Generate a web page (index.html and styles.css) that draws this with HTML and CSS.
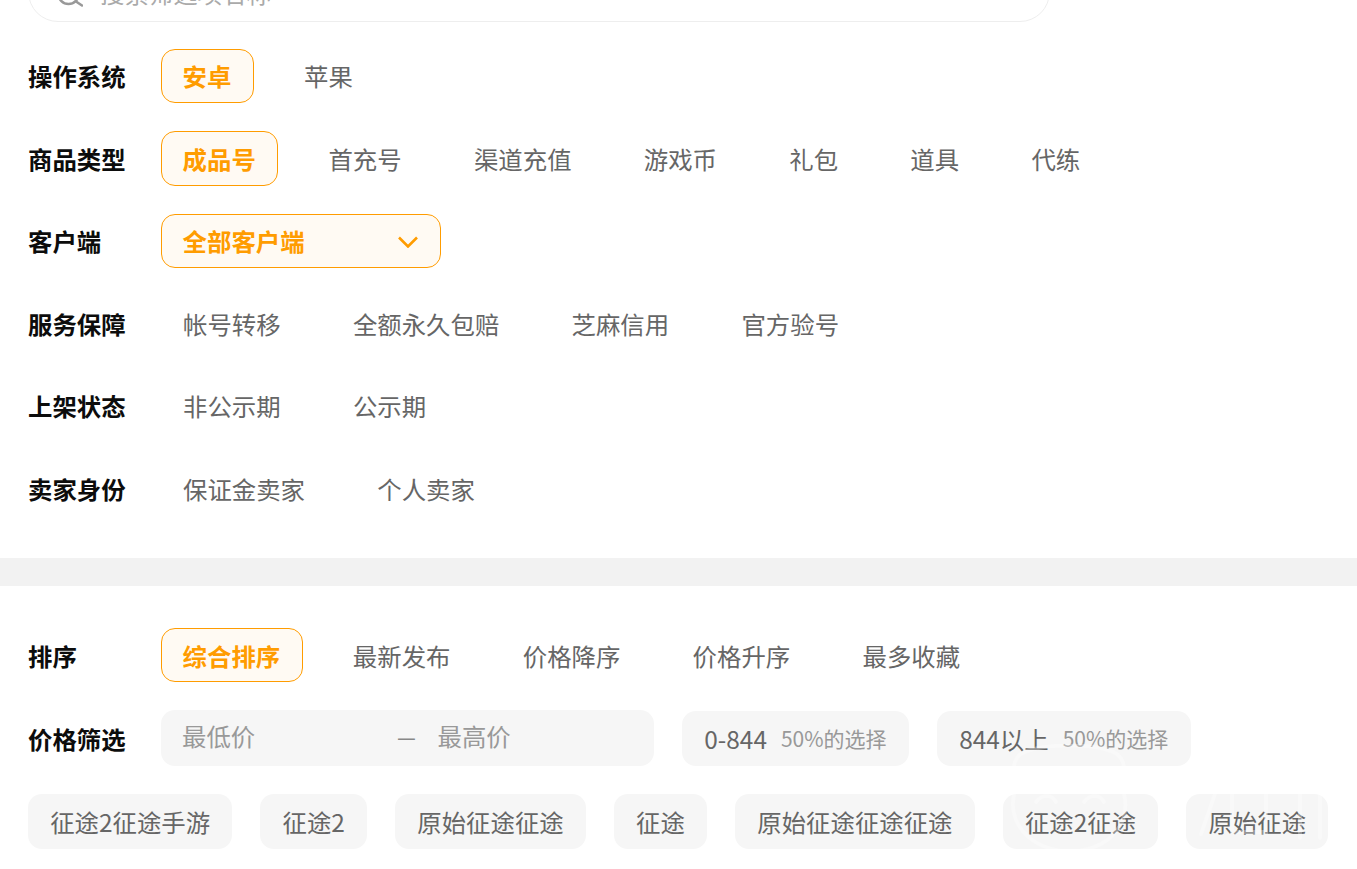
FILE: index.html
```html
<!DOCTYPE html>
<html lang="zh-CN">
<head>
<meta charset="utf-8">
<title>筛选</title>
<link rel="stylesheet" href="styles.css">
</head>
<body>
<div class="viewport">
  <section class="filters">
    <div class="search">
      <svg class="search-icon" width="26" height="30" viewBox="0 0 26 30"><circle cx="11.500" cy="17" r="10" fill="none" stroke="#999" stroke-width="2.600"/><path d="M19 24.500l6 4" fill="none" stroke="#999" stroke-width="2.600" stroke-linecap="round"/></svg>
      <span class="search-text">搜索筛选项名称</span>
    </div>
    <div class="row"><div class="label">操作系统</div><div class="opts"><span class="opt on">安卓</span><span class="opt">苹果</span></div></div>
    <div class="row"><div class="label">商品类型</div><div class="opts"><span class="opt on">成品号</span><span class="opt">首充号</span><span class="opt">渠道充值</span><span class="opt">游戏币</span><span class="opt">礼包</span><span class="opt">道具</span><span class="opt">代练</span></div></div>
    <div class="row"><div class="label">客户端</div><div class="opts"><span class="opt on select">全部客户端<svg class="chev" width="20" height="12" viewBox="0 0 20 12"><path d="M1 1.500L10 10.500l9-9" fill="none" stroke="#ff9c00" stroke-width="2.600"/></svg></span></div></div>
    <div class="row"><div class="label">服务保障</div><div class="opts"><span class="opt">帐号转移</span><span class="opt">全额永久包赔</span><span class="opt">芝麻信用</span><span class="opt">官方验号</span></div></div>
    <div class="row"><div class="label">上架状态</div><div class="opts"><span class="opt">非公示期</span><span class="opt">公示期</span></div></div>
    <div class="row"><div class="label">卖家身份</div><div class="opts"><span class="opt">保证金卖家</span><span class="opt">个人卖家</span></div></div>
  </section>
  <div class="divider"></div>
  <section class="sorts">
    <div class="row"><div class="label">排序</div><div class="opts"><span class="opt on">综合排序</span><span class="opt">最新发布</span><span class="opt">价格降序</span><span class="opt">价格升序</span><span class="opt">最多收藏</span></div></div>
    <div class="row price-row"><div class="label">价格筛选</div>
      <div class="range"><span class="range-min">最低价</span><span class="dash">—</span><span class="range-max">最高价</span></div>
      <div class="preset">0-844<small>50%的选择</small></div>
      <div class="preset">844以上<small>50%的选择</small></div>
    </div>
    <div class="tags"><span class="tag">征途2征途手游</span><span class="tag">征途2</span><span class="tag">原始征途征途</span><span class="tag">征途</span><span class="tag">原始征途征途征途</span><span class="tag">征途2征途</span><span class="tag">原始征途</span></div>
  </section>
  <svg class="watermark" width="357" height="125" viewBox="0 0 357 125">
    <path d="M18 40C10 22 14 10 30 6C50 0 90 0 108 6C124 10 128 24 120 40C134 66 122 104 70 108C18 104 4 66 18 40Z"/>
    <path d="M36 58c6-8 16-8 20 0M84 58c6-8 16-8 20 0"/>
    <path d="M165 48h26M178 48v50M215 50l-14 40M232 44h34v44h-34zM290 44h44v40M300 44v50M320 44v50"/>
  </svg>
</div>
</body>
</html>
```
FILE: styles.css
```css
* { box-sizing: border-box; }
html, body { margin: 0; padding: 0; background: #fff; }
body { font-family: "Noto Sans CJK SC", "Noto Sans", sans-serif; }
.viewport { position: relative; width: 1357px; height: 869px; overflow: hidden; }
.filters { padding: 0 28px; margin-top: -38px; height: 596px; }
.search { width: 1022px; height: 60px; border: 1px solid #eee; border-radius: 30px; display: flex; align-items: center; padding-left: 28px; color: #aaa; font-size: 24.420px; margin-bottom: 26.900px; }
.search-icon { margin-right: 17px; }
.row { display: flex; align-items: center; height: 54.200px; }
.filters .row { margin-bottom: 28.300px; }
.label { width: 133px; flex: none; font-size: 24.420px; font-weight: 700; color: #0c0c0c; line-height: 54px; padding-top: 1px; }
.opts { display: flex; gap: 28.250px; }
.opt { height: 54.200px; padding: 0 21px; border: 1px solid transparent; border-radius: 14px; display: flex; align-items: center; font-size: 24.420px; color: #666; }
.opt.on { border-color: #ff9c00; background: #fffaf3; color: #ff9c00; font-weight: 700; padding: 0 21.400px 0 20.600px; }
.opt.select { width: 280px; justify-content: space-between; padding-right: 21px; }
.chev { margin-top: 3px; margin-right: 1px; }
.divider { height: 28px; background: #f2f2f2; }
.sorts { padding: 42px 28px 0; }
.price-row { margin-top: 28px; height: 56px; }
.range { width: 493px; height: 56px; background: #f6f6f6; border-radius: 14px; display: flex; align-items: center; font-size: 24.420px; line-height: 1; color: #999; padding: 0 0 3px 21px; margin-right: 28px; }
.range-min { width: 215px; }
.dash { width: 40.500px; font-size: 21px; font-weight: 500; color: #888; }
.preset { height: 55px; background: #f6f6f6; border-radius: 14px; padding: 0 22.300px; display: flex; align-items: center; font-size: 24.420px; color: #666; margin-right: 28px; }
.preset small { font-size: 21px; color: #999; margin-left: 14px; }
.tags { display: flex; gap: 28px; margin-top: 28px; }
.tag { height: 55px; background: #f6f6f6; border-radius: 14px; padding: 0 22.200px; display: flex; align-items: center; font-size: 24.420px; color: #666; white-space: nowrap; }
.watermark { position: absolute; left: 1000px; top: 744px; pointer-events: none; }
.watermark path { fill: none; stroke: #fff; stroke-width: 4; stroke-opacity: .3; stroke-linecap: round; }
```
